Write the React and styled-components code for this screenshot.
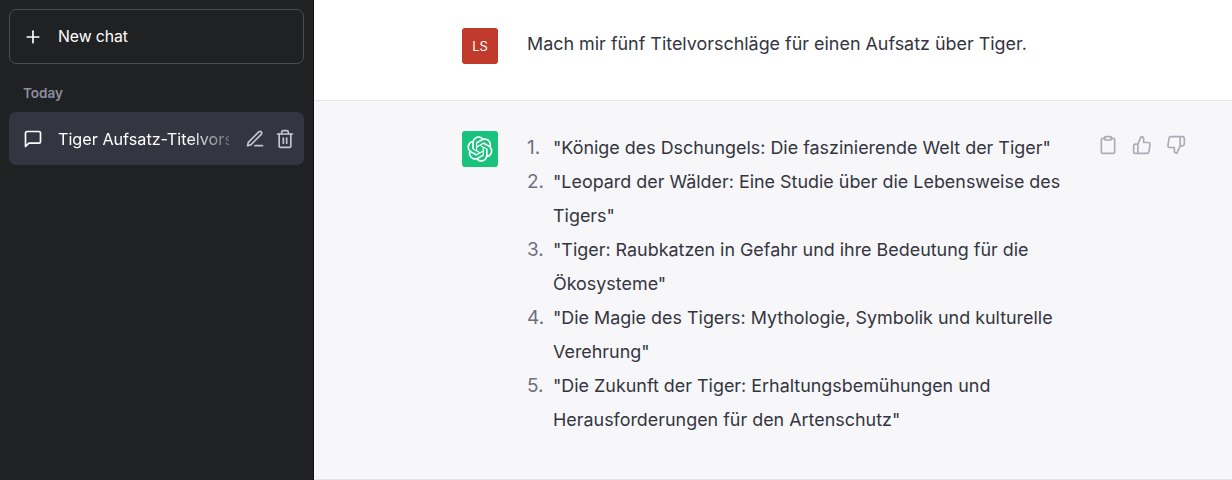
import React from "react";
import styled, { createGlobalStyle } from "styled-components";

const GlobalStyle = createGlobalStyle`
  html, body {
    margin: 0;
    padding: 0;
    height: 100%;
    font-family: Inter, "Noto Sans", sans-serif;
  }
  * {
    box-sizing: border-box;
  }
`;

const Page = styled.div`
  display: flex;
  width: 1232px;
  height: 480px;
  overflow: hidden;
`;

const Sidebar = styled.aside`
  display: flex;
  flex-direction: column;
  flex: 0 0 314px;
  padding: 9px 9px 0 9px;
  background: #202123;
  border-right: 1px solid #111214;
  color: #fff;
`;

const NewChatButton = styled.button`
  display: flex;
  align-items: center;
  gap: 15px;
  height: 55px;
  padding: 0 0 0 13px;
  background: transparent;
  border: 1px solid #4d4d4f;
  border-radius: 7px;
  color: #fff;
  font-family: inherit;
  font-size: 15.8px;
  letter-spacing: -0.1px;
`;

const GroupLabel = styled.div`
  margin: 19px 0 0 14px;
  height: 20px;
  line-height: 20px;
  color: #8e8ea0;
  font-size: 13.5px;
  font-weight: 600;
`;

const ChatItem = styled.div`
  display: flex;
  align-items: center;
  height: 53px;
  margin-top: 9px;
  padding: 0 9px 0 14px;
  background: #343541;
  border-radius: 7px;
`;

const ChatTitle = styled.div`
  flex: 0 0 171px;
  margin-left: 15px;
  overflow: hidden;
  white-space: nowrap;
  font-size: 16.2px;
  -webkit-mask-image: linear-gradient(to right, #000 76%, rgba(0, 0, 0, 0.25) 100%);
  mask-image: linear-gradient(to right, #000 76%, rgba(0, 0, 0, 0.25) 100%);
`;

const ChatActions = styled.div`
  display: flex;
  gap: 10px;
  margin-left: auto;
  color: #c5c5d2;
`;

const Main = styled.main`
  display: flex;
  flex: 1;
  flex-direction: column;
  background: #fff;
  color: #343541;
  font-size: 17.92px;
`;

const MessageRow = styled.section`
  display: flex;
  gap: 29px;
  padding-left: 148px;
  border-bottom: 1px solid #e5e5e9;
  background: ${(p) => (p.$assistant ? "#f7f7f9" : "#fff")};
  height: ${(p) => (p.$assistant ? "379px" : "101px")};
  padding-top: ${(p) => (p.$assistant ? "30px" : "28px")};
`;

const Avatar = styled.div`
  display: flex;
  align-items: center;
  justify-content: center;
  flex: 0 0 36px;
  height: 36px;
  border-radius: 3px;
  background: ${(p) => p.$bg};
  color: #fff;
  font-size: 13px;
`;

const UserText = styled.p`
  margin: -1px 0 0;
  line-height: 34px;
`;

const Answer = styled.ol`
  width: 538px;
  margin: 0;
  padding: 0;
  list-style: none;
  line-height: 34px;
  counter-reset: title;
`;

const AnswerItem = styled.li`
  display: grid;
  grid-template-columns: 26px 1fr;
  align-items: baseline;
  counter-increment: title;

  &::before {
    content: counter(title) ".";
    color: #6e6e80;
    font-size: 19px;
    line-height: 1;
  }
`;

const MessageActions = styled.div`
  display: flex;
  gap: 14px;
  margin: 4px 0 0 4px;
  height: 20px;
  color: #acacb8;
`;

const Icon = styled.svg`
  display: block;
  flex: none;
  fill: none;
  stroke: currentColor;
  stroke-width: 2;
  stroke-linecap: round;
  stroke-linejoin: round;
`;

const Glyph = ({ size = 20, children }) => (
  <Icon width={size} height={size} viewBox="0 0 24 24">
    {children}
  </Icon>
);

const OpenAILogo = () => (
  <svg width="26" height="26" viewBox="0 0 41 41" fill="none">
    <path
      fill="#fff"
      d="M37.5324 16.8707C37.9808 15.5241 38.1363 14.0974 37.9886 12.6859C37.8409 11.2744 37.3934 9.91076 36.676 8.68622C35.6126 6.83404 33.9882 5.3676 32.0373 4.4985C30.0864 3.62941 27.9098 3.40259 25.8215 3.85078C24.8796 2.7893 23.7219 1.94125 22.4257 1.36341C21.1295 0.785575 19.7249 0.491269 18.3058 0.500197C16.1708 0.495044 14.0893 1.16803 12.3614 2.42214C10.6335 3.67624 9.34853 5.44666 8.6917 7.47815C7.30085 7.76286 5.98686 8.3414 4.8377 9.17505C3.68854 10.0087 2.73073 11.0782 2.02839 12.312C0.956464 14.1591 0.498905 16.2988 0.721698 18.4228C0.944492 20.5467 1.83612 22.5449 3.268 24.1293C2.81966 25.4759 2.66413 26.9026 2.81182 28.3141C2.95951 29.7256 3.40701 31.0892 4.12437 32.3138C5.18791 34.1659 6.8123 35.6322 8.76321 36.5013C10.7141 37.3704 12.8907 37.5973 14.9789 37.1492C15.9208 38.2107 17.0786 39.0587 18.3747 39.6366C19.6709 40.2144 21.0755 40.5087 22.4946 40.4998C24.6307 40.5054 26.7133 39.8321 28.4418 38.5772C30.1704 37.3223 31.4556 35.5506 32.1119 33.5179C33.5027 33.2332 34.8167 32.6547 35.9659 31.821C37.115 30.9874 38.0728 29.9178 38.7752 28.684C39.8458 26.8371 40.3023 24.6979 40.0789 22.5748C39.8556 20.4517 38.9639 18.4544 37.5324 16.8707ZM22.4978 37.8849C20.7443 37.8874 19.0459 37.2733 17.6994 36.1501C17.7601 36.117 17.8666 36.0586 17.936 36.0161L25.9004 31.4156C26.1003 31.3019 26.2663 31.137 26.3813 30.9378C26.4964 30.7386 26.5563 30.5124 26.5549 30.2825V19.0542L29.9213 20.9981C29.9389 21.0069 29.9541 21.0198 29.9656 21.0358C29.977 21.0518 29.9842 21.0704 29.9867 21.0899V30.3823C29.9842 32.3696 29.1946 34.2748 27.7909 35.6816C26.3872 37.0884 24.4838 37.8826 22.4978 37.8849ZM6.39227 31.0064C5.51397 29.4888 5.19742 27.7107 5.49804 25.9832C5.55718 26.0187 5.66048 26.0818 5.73461 26.1244L13.699 30.7248C13.8975 30.8408 14.1233 30.902 14.3532 30.902C14.583 30.902 14.8088 30.8408 15.0073 30.7248L24.731 25.1103V28.9979C24.7321 29.0177 24.7283 29.0376 24.7199 29.0556C24.7115 29.0736 24.6988 29.0893 24.6829 29.1012L16.6317 33.7497C14.9096 34.7416 12.8643 35.0097 10.9447 34.4954C9.02506 33.9811 7.38785 32.7263 6.39227 31.0064ZM4.29707 13.6194C5.17156 12.0998 6.55279 10.9364 8.19885 10.3327C8.19885 10.4013 8.19491 10.5228 8.19491 10.6071V19.808C8.19351 20.0378 8.25334 20.2638 8.36823 20.4629C8.48312 20.6619 8.64893 20.8267 8.84863 20.9404L18.5723 26.5542L15.206 28.4979C15.1894 28.5089 15.1703 28.5155 15.1505 28.5173C15.1307 28.5191 15.1107 28.516 15.0924 28.5082L7.04046 23.8557C5.32135 22.8601 4.06716 21.2235 3.55289 19.3046C3.03862 17.3858 3.30624 15.3413 4.29707 13.6194ZM31.955 20.0556L22.2312 14.4411L25.5976 12.4981C25.6142 12.4872 25.6333 12.4805 25.6531 12.4787C25.6729 12.4769 25.6928 12.4801 25.7111 12.4879L33.7631 17.1364C34.9967 17.849 36.0017 18.8982 36.6606 20.1613C37.3194 21.4244 37.6047 22.849 37.4832 24.2684C37.3617 25.6878 36.8382 27.0432 35.9743 28.1759C35.1103 29.3086 33.9415 30.1717 32.6047 30.6641C32.6047 30.5947 32.6047 30.4733 32.6047 30.3889V21.188C32.6066 20.9586 32.5474 20.7328 32.4332 20.5338C32.319 20.3348 32.154 20.1698 31.955 20.0556ZM35.3055 15.0128C35.2464 14.9765 35.1431 14.9142 35.069 14.8717L27.1045 10.2712C26.906 10.1554 26.6803 10.0943 26.4504 10.0943C26.2206 10.0943 25.9948 10.1554 25.7963 10.2712L16.0726 15.8858V11.9982C16.0715 11.9783 16.0753 11.9585 16.0837 11.9405C16.0921 11.9225 16.1048 11.9068 16.1207 11.8949L24.1719 7.25025C25.4053 6.53903 26.8158 6.19376 28.2383 6.25482C29.6608 6.31589 31.0364 6.78077 32.2044 7.59508C33.3723 8.40939 34.2842 9.53945 34.8334 10.8531C35.3826 12.1667 35.5464 13.6095 35.3055 15.0128ZM14.2424 21.9419L10.8752 19.9981C10.8576 19.9893 10.8423 19.9763 10.8309 19.9602C10.8195 19.9441 10.8122 19.9254 10.8098 19.9058V10.6071C10.8107 9.18295 11.2173 7.78848 11.9819 6.58696C12.7466 5.38544 13.8377 4.42659 15.1275 3.82264C16.4173 3.21869 17.8524 2.99464 19.2649 3.1767C20.6775 3.35876 22.0089 3.93941 23.1034 4.85067C23.0427 4.88379 22.937 4.94215 22.8668 4.98473L14.9024 9.58517C14.7025 9.69878 14.5366 9.86356 14.4215 10.0626C14.3065 10.2616 14.2466 10.4877 14.2479 10.7175L14.2424 21.9419ZM16.071 17.9991L20.4018 15.4978L24.7325 17.9975V22.9985L20.4018 25.4983L16.071 22.9985V17.9991Z"
    />
  </svg>
);

const titles = [
  '"Könige des Dschungels: Die faszinierende Welt der Tiger"',
  '"Leopard der Wälder: Eine Studie über die Lebensweise des Tigers"',
  '"Tiger: Raubkatzen in Gefahr und ihre Bedeutung für die Ökosysteme"',
  '"Die Magie des Tigers: Mythologie, Symbolik und kulturelle Verehrung"',
  '"Die Zukunft der Tiger: Erhaltungsbemühungen und Herausforderungen für den Artenschutz"',
];

export default function App() {
  return (
    <Page>
      <GlobalStyle />
      <Sidebar>
        <NewChatButton>
          <Glyph>
            <line x1="12" y1="5" x2="12" y2="19" />
            <line x1="5" y1="12" x2="19" y2="12" />
          </Glyph>
          New chat
        </NewChatButton>
        <GroupLabel>Today</GroupLabel>
        <ChatItem>
          <Glyph>
            <path d="M21 15a2 2 0 0 1-2 2H7l-4 4V5a2 2 0 0 1 2-2h14a2 2 0 0 1 2 2z" />
          </Glyph>
          <ChatTitle>Tiger Aufsatz-Titelvors</ChatTitle>
          <ChatActions>
            <Glyph>
              <path d="M12 20h9" />
              <path d="M16.5 3.5a2.121 2.121 0 0 1 3 3L7 19l-4 1 1-4L16.5 3.5z" />
            </Glyph>
            <Glyph>
              <polyline points="3 6 5 6 21 6" />
              <path d="M19 6v14a2 2 0 0 1-2 2H7a2 2 0 0 1-2-2V6m3 0V4a2 2 0 0 1 2-2h4a2 2 0 0 1 2 2v2" />
              <line x1="10" y1="11" x2="10" y2="17" />
              <line x1="14" y1="11" x2="14" y2="17" />
            </Glyph>
          </ChatActions>
        </ChatItem>
      </Sidebar>
      <Main>
        <MessageRow>
          <Avatar $bg="#c0392b">LS</Avatar>
          <UserText>Mach mir fünf Titelvorschläge für einen Aufsatz über Tiger.</UserText>
        </MessageRow>
        <MessageRow $assistant>
          <Avatar $bg="#19c37d">
            <OpenAILogo />
          </Avatar>
          <Answer>
            {titles.map((title) => (
              <AnswerItem key={title}>
                <span>{title}</span>
              </AnswerItem>
            ))}
          </Answer>
          <MessageActions>
            <Glyph>
              <path d="M16 4h2a2 2 0 0 1 2 2v14a2 2 0 0 1-2 2H6a2 2 0 0 1-2-2V6a2 2 0 0 1 2-2h2" />
              <rect x="8" y="2" width="8" height="4" rx="1" ry="1" />
            </Glyph>
            <Glyph>
              <path d="M14 9V5a3 3 0 0 0-3-3l-4 9v11h11.28a2 2 0 0 0 2-1.7l1.38-9a2 2 0 0 0-2-2.3zM7 22H4a2 2 0 0 1-2-2v-7a2 2 0 0 1 2-2h3" />
            </Glyph>
            <Glyph>
              <path d="M10 15v4a3 3 0 0 0 3 3l4-9V2H5.72a2 2 0 0 0-2 1.7l-1.38 9a2 2 0 0 0 2 2.3zm7-13h2.67A2.31 2.31 0 0 1 22 4v7a2.31 2.31 0 0 1-2.33 2H17" />
            </Glyph>
          </MessageActions>
        </MessageRow>
      </Main>
    </Page>
  );
}
